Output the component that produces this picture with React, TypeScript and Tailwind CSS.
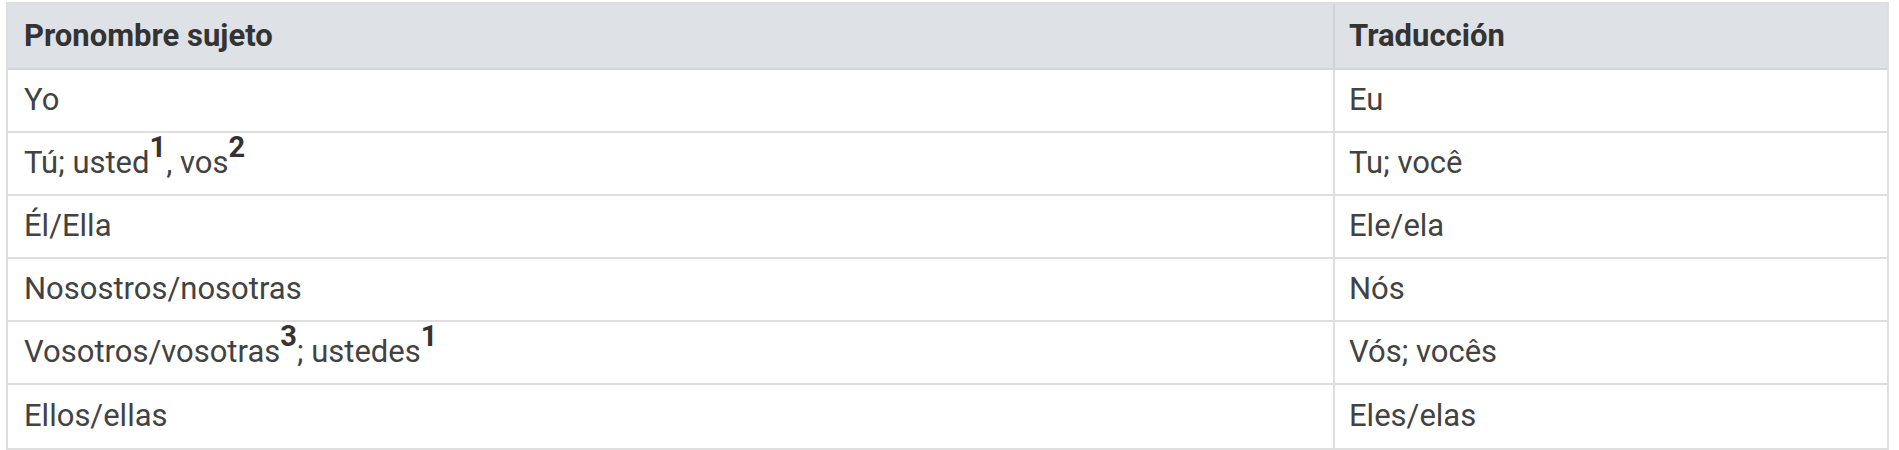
const rows: { es: React.ReactNode; pt: string }[] = [
  { es: "Yo", pt: "Eu" },
  {
    es: (
      <>
        Tú; usted<Sup>1</Sup>, vos<Sup>2</Sup>
      </>
    ),
    pt: "Tu; você",
  },
  { es: "Él/Ella", pt: "Ele/ela" },
  { es: "Nosostros/nosotras", pt: "Nós" },
  {
    es: (
      <>
        Vosotros/vosotras<Sup>3</Sup>; ustedes<Sup>1</Sup>
      </>
    ),
    pt: "Vós; vocês",
  },
  { es: "Ellos/ellas", pt: "Eles/elas" },
];

function Sup({ children }: { children: React.ReactNode }) {
  return <sup className="text-[29px] font-bold text-[#333] -top-[0.55em]">{children}</sup>;
}

export default function App() {
  return (
    <div className="bg-white w-[1899px] h-[450px] pt-[2px] pl-[6px] font-['Roboto',sans-serif]">
      <div className="w-[1883px] border-2 border-[#dedede] text-[31px] text-[#424242]">
        <div className="flex h-[66px] bg-[#dee1e6] border-b-2 border-[#d2d5da] font-bold text-[#333]">
          <div className="w-[1327px] border-r-2 border-[#d0d3d8] flex items-center pl-[16px]">
            Pronombre sujeto
          </div>
          <div className="flex-1 flex items-center pl-[14px]">Traducción</div>
        </div>
        {rows.map((r, i) => (
          <div
            key={i}
            className={`flex h-[63px] ${i < rows.length - 1 ? "border-b-2 border-[#dedede]" : ""}`}
          >
            <div className="w-[1327px] border-r-2 border-[#dedede] flex items-center pl-[16px]">
              <span>{r.es}</span>
            </div>
            <div className="flex-1 flex items-center pl-[14px]">{r.pt}</div>
          </div>
        ))}
      </div>
    </div>
  );
}
